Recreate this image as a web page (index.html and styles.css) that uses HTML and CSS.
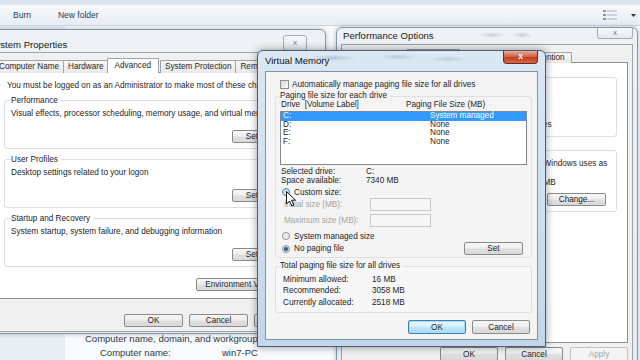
FILE: index.html
```html
<!DOCTYPE html>
<html>
<head>
  <title>Virtual Memory</title>
  <link rel="stylesheet" href="styles.css">
</head>
<body>
  <div class="explorer">
    <div class="explorer-top"></div>
    <div class="toolbar">
      <span class="tool">Burn</span>
      <span class="tool">New folder</span>
      <span class="tool-spacer"></span>
      <svg class="view-icon" width="14" height="10" viewBox="0 0 14 10">
        <rect x="0" y="0" width="3" height="2" fill="#8a97a6"/>
        <rect x="4" y="0.5" width="10" height="1" fill="#a9b4c0"/>
        <rect x="0" y="4" width="3" height="2" fill="#8a97a6"/>
        <rect x="4" y="4.5" width="10" height="1" fill="#a9b4c0"/>
        <rect x="0" y="8" width="3" height="2" fill="#8a97a6"/>
        <rect x="4" y="8.5" width="10" height="1" fill="#a9b4c0"/>
      </svg>
      <svg class="view-arrow" width="5" height="3" viewBox="0 0 5 3"><path d="M0 0 L5 0 L2.5 3 Z" fill="#333"/></svg>
    </div>
    <div class="explorer-body">
      <div class="nav-pane"></div>
      <div class="details">
        <div class="details-head">Computer name, domain, and workgroup settings</div>
        <div class="details-row"><span class="details-label">Computer name:</span><span>win7-PC</span></div>
      </div>
    </div>
  </div>

  <div class="window sysprop">
    <div class="titlebar">
      <span class="title">System Properties</span>
      <span class="close-btn">x</span>
    </div>
    <div class="client sys-client">
      <div class="tabs">
        <span class="tab">Computer Name</span>
        <span class="tab">Hardware</span>
        <span class="tab selected">Advanced</span>
        <span class="tab">System Protection</span>
        <span class="tab">Remote</span>
      </div>
      <div class="tab-panel sys-panel">
        <p class="note">You must be logged on as an Administrator to make most of these changes.</p>
        <fieldset class="group sys-group">
          <legend>Performance</legend>
          <p>Visual effects, processor scheduling, memory usage, and virtual memory</p>
          <div class="group-actions"><button class="btn settings-btn">Settings...</button></div>
        </fieldset>
        <fieldset class="group sys-group">
          <legend>User Profiles</legend>
          <p>Desktop settings related to your logon</p>
          <div class="group-actions"><button class="btn settings-btn">Settings...</button></div>
        </fieldset>
        <fieldset class="group sys-group">
          <legend>Startup and Recovery</legend>
          <p>System startup, system failure, and debugging information</p>
          <div class="group-actions"><button class="btn settings-btn">Settings...</button></div>
        </fieldset>
        <div class="panel-actions"><button class="btn env-btn">Environment Variables...</button></div>
      </div>
      <div class="dialog-buttons sys-buttons">
        <button class="btn">OK</button>
        <button class="btn">Cancel</button>
        <button class="btn">Apply</button>
      </div>
    </div>
  </div>

  <div class="window perfopt">
    <div class="titlebar">
      <span class="title">Performance Options</span>
      <span class="close-btn">x</span>
    </div>
    <div class="client perf-client">
      <div class="tabs perf-tabs">
        <span class="tab">Visual Effects</span>
        <span class="tab selected">Advanced</span>
        <span class="tab">Data Execution Prevention</span>
      </div>
      <div class="tab-panel perf-panel">
        <fieldset class="group perf-group">
          <legend>Processor scheduling</legend>
          <p>Choose how to allocate processor resources.</p>
          <p class="spaced">Adjust for best performance of:</p>
          <div class="choice-row">
            <span class="option"><span class="radio checked"></span>Programs</span>
            <span class="option background"><span class="radio"></span>Background services</span>
          </div>
        </fieldset>
        <fieldset class="group perf-group vm-summary">
          <legend>Virtual memory</legend>
          <p>A paging file is an area on the hard disk that Windows uses as<br>if it were RAM.</p>
          <div class="total-line"><span>Total paging file size for all drives:</span><span>2518 MB</span></div>
          <div class="group-actions"><button class="btn change-btn">Change...</button></div>
        </fieldset>
      </div>
      <div class="dialog-buttons perf-buttons">
        <button class="btn">OK</button>
        <button class="btn">Cancel</button>
        <button class="btn" disabled>Apply</button>
      </div>
    </div>
  </div>

  <div class="window active vmem">
    <div class="titlebar">
      <span class="title">Virtual Memory</span>
      <span class="close-btn red">x</span>
    </div>
    <div class="client vm-client">
      <div class="check-row"><span class="checkbox"></span>Automatically manage paging file size for all drives</div>
      <fieldset class="vm-group">
        <legend>Paging file size for each drive</legend>
        <div class="drive-head"><span>Drive&nbsp; [Volume Label]</span><span>Paging File Size (MB)</span></div>
        <div class="drive-list">
          <div class="drive-row selected"><span>C:</span><span>System managed</span></div>
          <div class="drive-row"><span>D:</span><span>None</span></div>
          <div class="drive-row"><span>E:</span><span>None</span></div>
          <div class="drive-row"><span>F:</span><span>None</span></div>
        </div>
        <div class="info-grid">
          <span>Selected drive:</span><span>C:</span>
          <span>Space available:</span><span>7340 MB</span>
        </div>
        <div class="radio-row custom"><span class="radio hover"></span>Custom size:</div>
        <div class="size-row"><span>Initial size (MB):</span><span class="field"></span></div>
        <div class="size-row max"><span>Maximum size (MB):</span><span class="field"></span></div>
        <div class="radio-row managed"><span class="radio"></span>System managed size</div>
        <div class="radio-row nopage"><span class="radio checked"></span>No paging file<button class="btn set-btn">Set</button></div>
      </fieldset>
      <fieldset class="vm-group totals">
        <legend>Total paging file size for all drives</legend>
        <div class="total-grid">
          <span>Minimum allowed:</span><span>16 MB</span>
          <span>Recommended:</span><span>3058 MB</span>
          <span>Currently allocated:</span><span>2518 MB</span>
        </div>
      </fieldset>
      <div class="dialog-buttons vm-buttons">
        <button class="btn focused">OK</button>
        <button class="btn">Cancel</button>
      </div>
    </div>
  </div>

  <svg class="cursor" width="11" height="16" viewBox="0 0 11 16">
    <path d="M0.5 0.5 L0.5 13 L3.5 10 L6 15 L8 14 L5.5 9.2 L9.5 9.2 Z" fill="#fff" stroke="#111" stroke-width="1" stroke-linejoin="round"/>
  </svg>
</body>
</html>
```

FILE: styles.css
```css
* {
  box-sizing: border-box;
}

body {
  margin: 0;
  width: 640px;
  height: 360px;
  overflow: hidden;
  position: relative;
  background: #fff;
  font-family: 'Liberation Sans', Arial, sans-serif;
  font-size: 8.2px;
  line-height: 9px;
  color: #1e1e1e;
}

p {
  margin: 0;
  white-space: nowrap;
}

/* explorer behind the dialogs */
.explorer {
  display: flex;
  flex-direction: column;
  height: 360px;
}

.explorer-top {
  height: 5px;
  background: #dbe3ec;
}

.toolbar {
  height: 21px;
  display: flex;
  align-items: center;
  padding: 0 4px 0 13px;
  background: linear-gradient(#f6f9fc, #e7edf5);
  border-bottom: 1px solid #cdd7e2;
  font-size: 8.5px;
  color: #1e3a5b;
}

.tool {
  margin-right: 27px;
}

.tool-spacer {
  flex: 1;
}

.view-icon {
  margin-right: 14px;
}

.explorer-body {
  flex: 1;
  display: flex;
}

.nav-pane {
  width: 65px;
  background: #e9eef4;
}

.details {
  flex: 1;
  padding: 307px 0 0 20px;
  background: #f9fafc;
  font-size: 9.5px;
  line-height: 12px;
  color: #2d3846;
}

.details-row {
  display: flex;
  margin-top: 2px;
  padding-left: 15px;
}

.details-label {
  width: 122px;
}

/* windows */
.window {
  position: absolute;
  border: 1px solid #8796a6;
  border-radius: 6px 6px 0 0;
  background: linear-gradient(#eef2f6, #e3e9ef);
  box-shadow: 0 0 5px rgba(0, 0, 0, 0.25);
}

.window.active {
  border-color: #4a5e74;
  background: linear-gradient(#dbe7f3, #c3d6ea);
  box-shadow: 0 0 8px rgba(0, 0, 0, 0.4);
}

.titlebar {
  display: flex;
  align-items: flex-start;
}

.title {
  flex: 1;
  font-size: 9.6px;
  color: #222;
  white-space: nowrap;
}

.close-btn {
  width: 24px;
  height: 16px;
  border: 1px solid #a2adba;
  border-radius: 3px;
  background: linear-gradient(#f7f9fb, #e4e9ef);
  color: #6c7886;
  font-size: 8px;
  line-height: 13px;
  text-align: center;
}

.close-btn.red {
  width: 35px;
  height: 13px;
  border-color: #6a2a1e;
  border-top: none;
  border-radius: 0 0 4px 4px;
  background: linear-gradient(#e9a898, #d2664c 45%, #c1401f 55%, #d76a45);
  color: #fff;
  font-weight: bold;
  font-size: 8.5px;
  line-height: 11px;
}

.client {
  border: 1px solid #98a4b2;
  background: #f0f0f0;
}

.btn {
  font: inherit;
  color: #1e1e1e;
  width: 59px;
  height: 13px;
  padding: 0;
  line-height: 11px;
  border: 1px solid #8a8a8a;
  border-radius: 2px;
  background: linear-gradient(#f7f7f7, #eeeeee 48%, #e0e0e0 52%, #d8d8d8);
}

.btn:disabled {
  color: #a6a6a6;
  border-color: #c2c2c2;
  background: #f4f4f4;
}

.btn.focused {
  border-color: #3c7fb1;
  box-shadow: inset 0 0 0 1px #a9dcf7;
  background: linear-gradient(#eaf6fd, #d9f0fc 48%, #bee6fd 52%, #a7d9f5);
}

.dialog-buttons {
  display: flex;
  justify-content: flex-end;
  gap: 6px;
}

/* tabs */
.tabs {
  display: flex;
  align-items: flex-end;
  height: 15px;
  margin-bottom: -1px;
  position: relative;
  z-index: 1;
}

.tab {
  height: 13px;
  padding: 0 4px;
  line-height: 11px;
  border: 1px solid #9ea4ad;
  border-bottom: none;
  margin-right: -1px;
  background: linear-gradient(#f7f7f7, #e8e8e8);
  white-space: nowrap;
}

.tab.selected {
  height: 15px;
  padding: 0 7px;
  line-height: 13px;
  background: #fff;
  margin: 0 1px 0 -1px;
  position: relative;
}

.tab-panel {
  border: 1px solid #8b9099;
  background: #fff;
}

.group {
  margin: 0;
  border: 1px solid #d5dfe5;
  border-radius: 3px;
  min-width: 0;
}

.group legend {
  padding: 0 3px 0 0;
  line-height: 9px;
}

.group-actions,
.panel-actions {
  display: flex;
  justify-content: flex-end;
}

/* System Properties */
.sysprop {
  left: -20px;
  top: 29px;
  width: 346px;
  z-index: 1;
}

.sysprop .titlebar {
  height: 22px;
  padding: 0 18px 0 8px;
}

.sysprop .title {
  padding-top: 7px;
  line-height: 16px;
}

.sysprop .close-btn {
  margin-top: 5px;
}

.sys-client {
  margin: 0 6px 1px;
  padding: 5px 5px 4px 6px;
}

.sys-panel {
  padding: 8px 9px 7px 9px;
}

.note {
  margin-left: 3px;
}

.sys-group {
  margin-top: 6px;
  padding: 4px 6px 5px;
}

.sys-group:first-of-type {
  margin-top: 5.5px;
}

.sys-group .group-actions {
  margin-top: 12px;
}

.settings-btn {
  width: 64px;
}

.panel-actions {
  margin-top: 11.5px;
}

.env-btn {
  width: 107px;
}

.sys-buttons {
  margin-top: 15px;
}

/* Performance Options */
.perfopt {
  left: 336px;
  top: 27px;
  width: 302px;
  height: 345px;
  z-index: 2;
}

.perfopt .titlebar {
  height: 16px;
  padding: 0 4px 0 6px;
  background:
    radial-gradient(ellipse 14px 3px at 155px 7px, rgba(110, 125, 145, 0.3), transparent),
    radial-gradient(ellipse 10px 3px at 185px 7px, rgba(110, 125, 145, 0.3), transparent);
}

.perfopt .title {
  line-height: 15px;
}

.perfopt .close-btn {
  width: 36px;
  height: 11px;
  border-top: none;
  border-radius: 0 0 3px 3px;
  line-height: 9px;
}

.perf-client {
  margin: 0 4px;
  padding: 4px 4px 0;
}

.perf-tabs {
  height: 14px;
}

.perf-tabs .tab {
  height: 11px;
  padding: 0 6px;
  line-height: 9px;
}

.perf-tabs .tab.selected {
  height: 14px;
  padding: 0 7px;
  line-height: 12px;
}

.perf-panel {
  height: 281px;
  padding: 9.5px 10px 0 9px;
}

.perf-group {
  padding: 4px 10px 7.5px 25px;
}

.perf-group .spaced {
  margin-top: 6px;
}

.choice-row {
  display: flex;
  margin-top: 10px;
  height: 9px;
  align-items: center;
}

.option {
  display: flex;
  align-items: center;
  gap: 4px;
}

.option.background {
  margin-left: 34px;
}

.vm-summary {
  margin-top: 8.5px;
  padding-bottom: 5px;
}

.total-line {
  display: grid;
  grid-template-columns: 141px auto;
  margin-top: 1px;
  white-space: nowrap;
}

.vm-summary .group-actions {
  margin-top: 6.5px;
}

.perf-buttons {
  margin-top: 4px;
  gap: 7px;
}

.perf-buttons .btn {
  width: 58px;
  height: 14px;
}

/* Virtual Memory */
.vmem {
  left: 257px;
  top: 50px;
  width: 289px;
  height: 297px;
  z-index: 3;
}

.vmem .titlebar {
  height: 20px;
  padding: 0 7px 0 7px;
  background:
    radial-gradient(ellipse 24px 3px at 75px 7px, rgba(110, 125, 145, 0.35), transparent),
    radial-gradient(ellipse 18px 3px at 140px 6px, rgba(110, 125, 145, 0.3), transparent),
    radial-gradient(ellipse 20px 3px at 190px 8px, rgba(110, 125, 145, 0.25), transparent);
}

.vmem .title {
  line-height: 20px;
  color: #111;
}

.vm-client {
  margin: 0 7px;
  height: 269px;
  padding: 7px 5px 5px 9px;
  background: #f4f4f4;
  border-color: #7f93a8;
}

.check-row {
  display: flex;
  align-items: center;
  gap: 3px;
  height: 10px;
  margin-left: 5px;
}

.checkbox {
  width: 9px;
  height: 9px;
  border: 1px solid #8e8f8f;
  background: linear-gradient(135deg, #d8d8d8, #fbfbfb);
}

.vm-group {
  margin: 2px 0 0;
  padding: 0 4px 2px;
  border: 1px solid #e0e0e0;
  border-radius: 3px;
  min-width: 0;
}

.vm-group legend {
  padding: 0 3px 0 0;
  line-height: 10px;
}

.drive-head {
  display: grid;
  grid-template-columns: 125px auto;
  height: 8px;
  line-height: 8px;
  padding-left: 1px;
}

.drive-list {
  margin-top: 2px;
  height: 54px;
  border: 1px solid #828790;
  background: #fff;
}

.drive-row {
  display: grid;
  grid-template-columns: 147px auto;
  height: 8.5px;
  line-height: 8.5px;
  padding-left: 2px;
}

.drive-row.selected {
  background: #3399ff;
  color: #fff;
}

.info-grid {
  display: grid;
  grid-template-columns: 85px auto;
  margin-top: 1.5px;
  padding-left: 1px;
}

.radio-row {
  display: flex;
  align-items: center;
  gap: 4px;
  height: 10px;
  padding-left: 2px;
}

.radio-row.custom {
  margin-top: 2.5px;
}

.radio-row.managed {
  margin-top: 4px;
}

.radio-row.nopage {
  height: 13px;
  margin-top: 1px;
}

.set-btn {
  margin-left: auto;
  margin-right: 4px;
}

.radio {
  width: 8px;
  height: 8px;
  border-radius: 50%;
  border: 1px solid #8e8f8f;
  background: radial-gradient(circle, #e4e4e4, #fafafa);
}

.radio.checked {
  background: radial-gradient(circle, #1f4f7c 0, #3b6c98 1.6px, #c9d6e2 2.4px, #f4f4f4 3.2px);
}

.radio.hover {
  border-color: #3c7fb1;
  background: radial-gradient(circle, #b9e0f6, #def1fb);
}

.size-row {
  display: grid;
  grid-template-columns: 86px 61px;
  align-items: center;
  height: 14px;
  padding-left: 4px;
  color: #a3a3a3;
}

.size-row.max {
  margin-top: 2px;
}

.field {
  height: 13px;
  border: 1px solid #c9c9c9;
  background: #f6f6f6;
}

.totals {
  margin-top: 3px;
  padding-bottom: 4.25px;
  background: #f7f7f7;
}

.total-grid {
  display: grid;
  grid-template-columns: 89px auto;
  grid-auto-rows: 11.5px;
  align-items: center;
  margin-top: 2.25px;
  padding-left: 3px;
}

.vm-buttons {
  margin-top: 7px;
  margin-right: 2px;
}

.vm-buttons .btn {
  width: 58px;
  height: 14px;
}

.cursor {
  position: absolute;
  left: 286px;
  top: 191px;
  z-index: 4;
}
```
